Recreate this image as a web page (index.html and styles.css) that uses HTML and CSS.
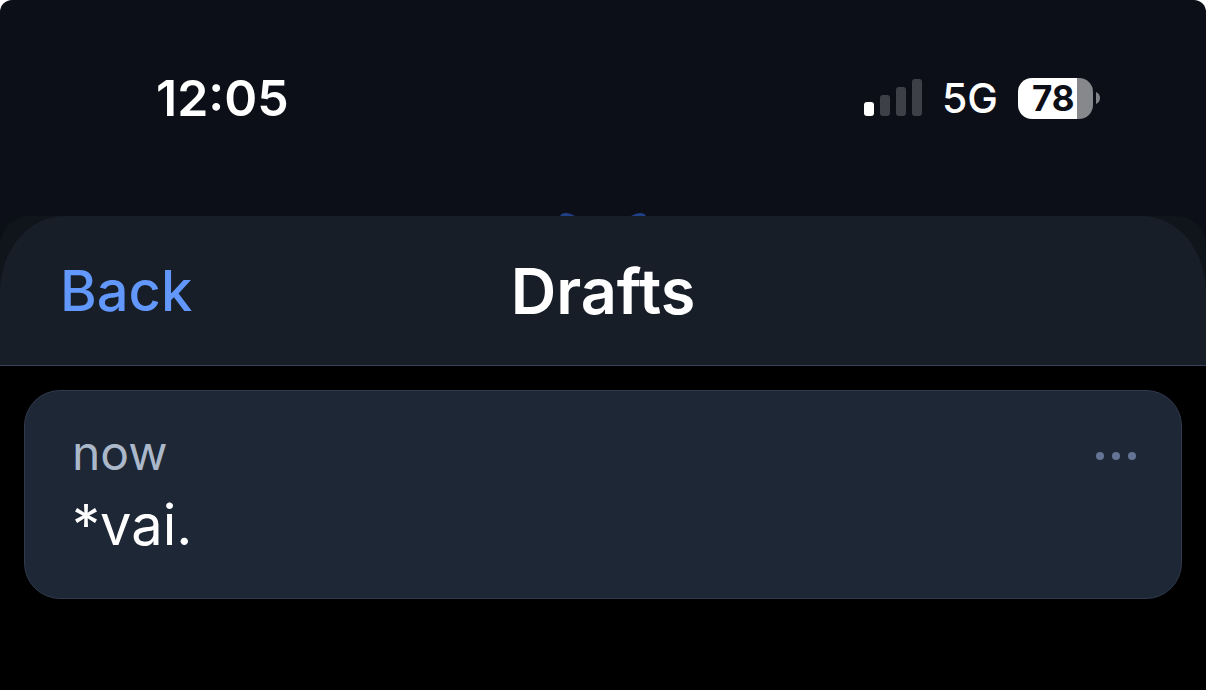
FILE: index.html
```html
<!DOCTYPE html>
<html lang="en">
<head>
  <meta charset="UTF-8">
  <meta name="viewport" content="width=device-width, initial-scale=1.0">
  <title>Drafts</title>
  <link rel="stylesheet" href="styles.css">
</head>
<body>
  <div class="screen">
    <div class="status-bar">
      <time class="clock">12:05</time>
      <div class="status-icons">
        <svg class="signal" width="58" height="38" viewBox="0 0 58 38" aria-hidden="true">
          <rect x="0" y="23" width="10" height="14" rx="3" fill="#fff"/>
          <rect x="16" y="16" width="10" height="21" rx="3" fill="#3d4046"/>
          <rect x="32" y="8" width="10" height="29" rx="3" fill="#3d4046"/>
          <rect x="48" y="0" width="10" height="37" rx="3" fill="#3d4046"/>
        </svg>
        <span class="network">5G</span>
        <div class="battery">
          <div class="battery-body"><span>78</span></div>
          <svg width="4" height="14" viewBox="0 0 4 14" aria-hidden="true">
            <path d="M0 1C2.5 2 4 4.300 4 7S2.500 12 0 13Z" fill="#808287"/>
          </svg>
        </div>
      </div>
    </div>

    <!-- top of the logo that shows above the sheet -->
    <svg class="logo-peek" width="90" height="4" viewBox="0 0 90 4" aria-hidden="true">
      <path d="M2 4C4 0 10 0 17 4Z" fill="#213f86"/>
      <path d="M73 4C80 0 86 0 88 4Z" fill="#213f86"/>
    </svg>

    <div class="backdrop">
      <header class="sheet-header">
        <button type="button" class="back">Back</button>
        <h1>Drafts</h1>
      </header>
    </div>

    <main class="drafts">
      <article class="draft">
        <div class="draft-top">
          <span class="draft-time">now</span>
          <button type="button" class="more" aria-label="More options">
            <svg width="40" height="8" viewBox="0 0 40 8" aria-hidden="true">
              <circle cx="4" cy="4" r="4"/>
              <circle cx="20" cy="4" r="4"/>
              <circle cx="36" cy="4" r="4"/>
            </svg>
          </button>
        </div>
        <p class="draft-text">*vai.</p>
      </article>
    </main>
  </div>
</body>
</html>
```
FILE: styles.css
```css
* {
  box-sizing: border-box;
}
body {
  margin: 0;
  background: #fff;
  color: #fff;
  font-family: Inter, "Liberation Sans", sans-serif;
}
button {
  padding: 0;
  border: 0;
  background: none;
  font: inherit;
  cursor: pointer;
}
svg {
  display: block;
}
.screen {
  display: flex;
  flex-direction: column;
  min-height: 100vh;
  overflow: hidden;
  border-radius: 12px 12px 0 0;
  background: #0c0f17;
}

/* status bar */
.status-bar {
  display: flex;
  justify-content: space-between;
  align-items: center;
  height: 212px;
  padding: 0 106px 16px 156px;
}
.clock {
  font-size: 50px;
  font-weight: 600;
}
.status-icons {
  display: flex;
  align-items: center;
  gap: 20px;
}
.network {
  font-size: 41px;
  font-weight: 500;
}
.battery {
  display: flex;
  align-items: center;
  gap: 3px;
}
.battery-body {
  width: 75px;
  padding-left: 14px;
  border-radius: 14px;
  background: linear-gradient(to right, #fff 59px, #86888c 59px);
  color: #0c0f17;
  font-size: 35px;
  font-weight: 700;
  line-height: 41px;
}
.logo-peek {
  align-self: center;
}

/* sheet */
.backdrop {
  border-radius: 30px 30px 0 0;
  background: #10151c;
}
.sheet-header {
  display: grid;
  grid-template-columns: 1fr auto 1fr;
  align-items: center;
  height: 150px;
  padding: 0 60px;
  border-bottom: 1px solid #3a4258;
  border-radius: 64px 64px 0 0 / 76px 76px 0 0;
  background: #171e27;
}
.sheet-header h1 {
  margin: 0;
  font-size: 63px;
  font-weight: 600;
}
.back {
  justify-self: start;
  color: #6297fb;
  font-size: 56px;
  font-weight: 500;
}
.drafts {
  flex: 1;
  padding: 24px;
  background: #000;
}
.draft {
  padding: 34px 45px 37px 47px;
  border: 1px solid #313a4d;
  border-radius: 36px;
  background: #1e2736;
}
.draft-top {
  display: flex;
  justify-content: space-between;
  align-items: center;
}
.draft-time {
  color: #abb8c9;
  font-size: 48px;
  line-height: 56px;
}
.more {
  padding-top: 6px;
  fill: #657394;
}
.draft-text {
  margin: 0;
  padding-top: 8px;
  font-size: 56px;
  line-height: 72px;
}
```
